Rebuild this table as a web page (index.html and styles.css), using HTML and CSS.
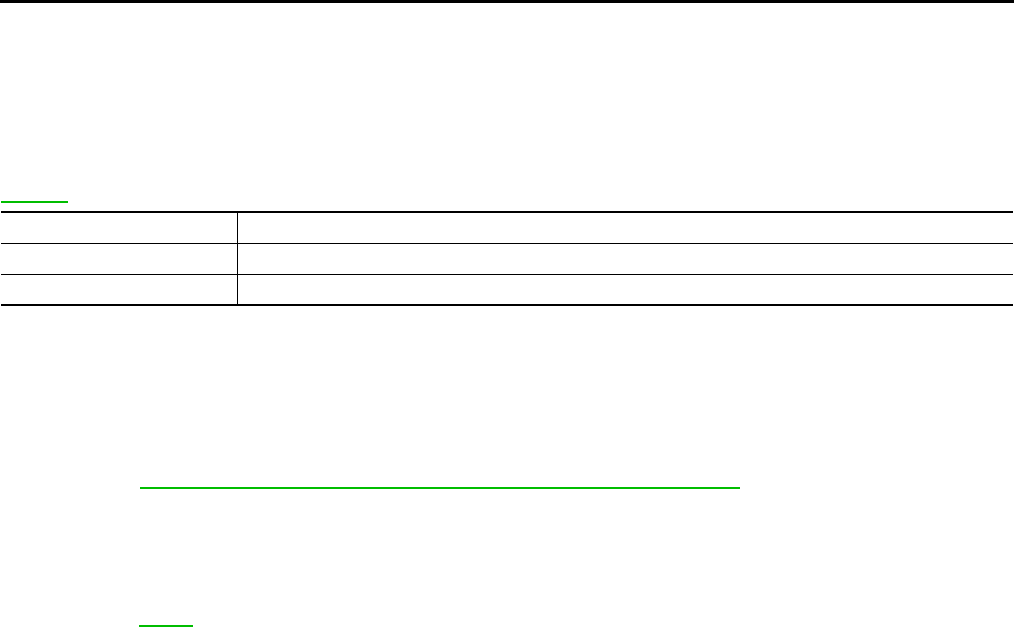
FILE: index.html
```html
<!DOCTYPE html>
<html lang="en">
<head>
    <meta charset="UTF-8">
    <meta name="viewport" content="width=device-width, initial-scale=1.0">
    <title>Spec sheet</title>
    <link rel="stylesheet" href="styles.css">
</head>
<body>
    <div class="page-rule"></div>

    <a class="ref-link ref-top" href="#"></a>

    <div class="spec-table">
        <div class="spec-row">
            <div class="spec-cell"></div>
            <div class="spec-cell"></div>
        </div>
        <div class="spec-row">
            <div class="spec-cell"></div>
            <div class="spec-cell"></div>
        </div>
        <div class="spec-row spec-row-last">
            <div class="spec-cell"></div>
            <div class="spec-cell"></div>
        </div>
    </div>

    <a class="ref-link ref-long" href="#"></a>
    <a class="ref-link ref-short" href="#"></a>
</body>
</html>
```

FILE: styles.css
```css
body {
    margin: 0;
    padding: 0;
    background-color: #fff;
    font-family: "Liberation Sans", Arial, sans-serif;
    font-size: 14px;
}
.page-rule {
    width: 1014px;
    height: 3px;
    background-color: #000;
}
.ref-link {
    display: block;
    height: 2px;
    background-color: #00bd00;
}
.ref-top {
    width: 67px;
    margin: 198px 0 0 1px;
}
.spec-table {
    width: 1012px;
    margin: 8px 0 0 1px;
    border-top: 2px solid #000;
    border-bottom: 2px solid #000;
}
.spec-row {
    display: grid;
    grid-template-columns: 237px 1fr;
    height: 30px;
}
.spec-row + .spec-row {
    border-top: 1px solid #000;
}
.spec-row-last {
    height: 29px;
}
.spec-cell:first-child {
    border-right: 1px solid #000;
}
.ref-long {
    width: 600px;
    margin: 181px 0 0 140px;
}
.ref-short {
    width: 54px;
    margin: 136px 0 0 139px;
}
```
